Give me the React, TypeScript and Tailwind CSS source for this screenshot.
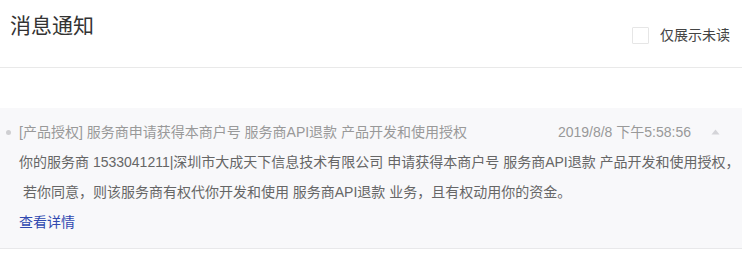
import { useState } from "react";

const App = () => {
  const [onlyUnread, setOnlyUnread] = useState(false);
  const [open, setOpen] = useState(true);

  return (
    <div
      className="w-[742px] h-[256px] bg-white overflow-hidden"
      style={{ fontFamily: '"Liberation Sans", "Noto Sans CJK SC", sans-serif' }}
    >
      {/* Header */}
      <div className="h-[68px] flex justify-between border-b border-[#e9e9e9]">
        <h1 className="pl-[10px] pt-[11px] text-[21px] leading-[30px] text-[#333] font-normal">
          消息通知
        </h1>
        <label className="flex items-center gap-[11px] pt-[26px] pr-[12px] self-start cursor-pointer">
          <input
            type="checkbox"
            checked={onlyUnread}
            onChange={() => setOnlyUnread(!onlyUnread)}
            className="appearance-none w-[17px] h-[17px] border border-[#e6e6e6] bg-white rounded-[1px]"
          />
          <span className="text-[14px] leading-[18px] text-[#444]">仅展示未读</span>
        </label>
      </div>

      {/* Message */}
      <div className="mt-[40px] bg-[#f8f8fa] border-b border-[#e8e8ea] pt-[9px] pb-[11px] text-[14px] leading-[30px]">
        <div className="flex items-center pr-[22px]">
          <span className="ml-[6px] mr-[8px] w-[5px] h-[5px] rounded-full bg-[#cfcfd2]" />
          <span className="text-[#999] whitespace-nowrap">
            [产品授权] 服务商申请获得本商户号 服务商API退款 产品开发和使用授权
          </span>
          <span className="ml-auto text-[#999] whitespace-nowrap">2019/8/8 下午5:58:56</span>
          <button onClick={() => setOpen(!open)} className="ml-[20px] flex items-center h-[30px]">
            <svg width="9" height="6" viewBox="0 0 9 6">
              <path d={open ? "M4.5 0.5 L8.5 5.5 L0.5 5.5 Z" : "M4.5 5.5 L8.5 0.5 L0.5 0.5 Z"} fill="#d4d4d8" />
            </svg>
          </button>
        </div>
        {open && (
          <div className="pl-[19px] text-[#666]">
            <div className="whitespace-nowrap">
              你的服务商 1533041211|深圳市大成天下信息技术有限公司 申请获得本商户号 服务商API退款 产品开发和使用授权，
            </div>
            <div className="whitespace-pre">
              {" 若你同意，则该服务商有权代你开发和使用 服务商API退款 业务，且有权动用你的资金。"}
            </div>
            <a href="#" className="block w-fit text-[#3049b0]">
              查看详情
            </a>
          </div>
        )}
      </div>
    </div>
  );
};

export default App;
